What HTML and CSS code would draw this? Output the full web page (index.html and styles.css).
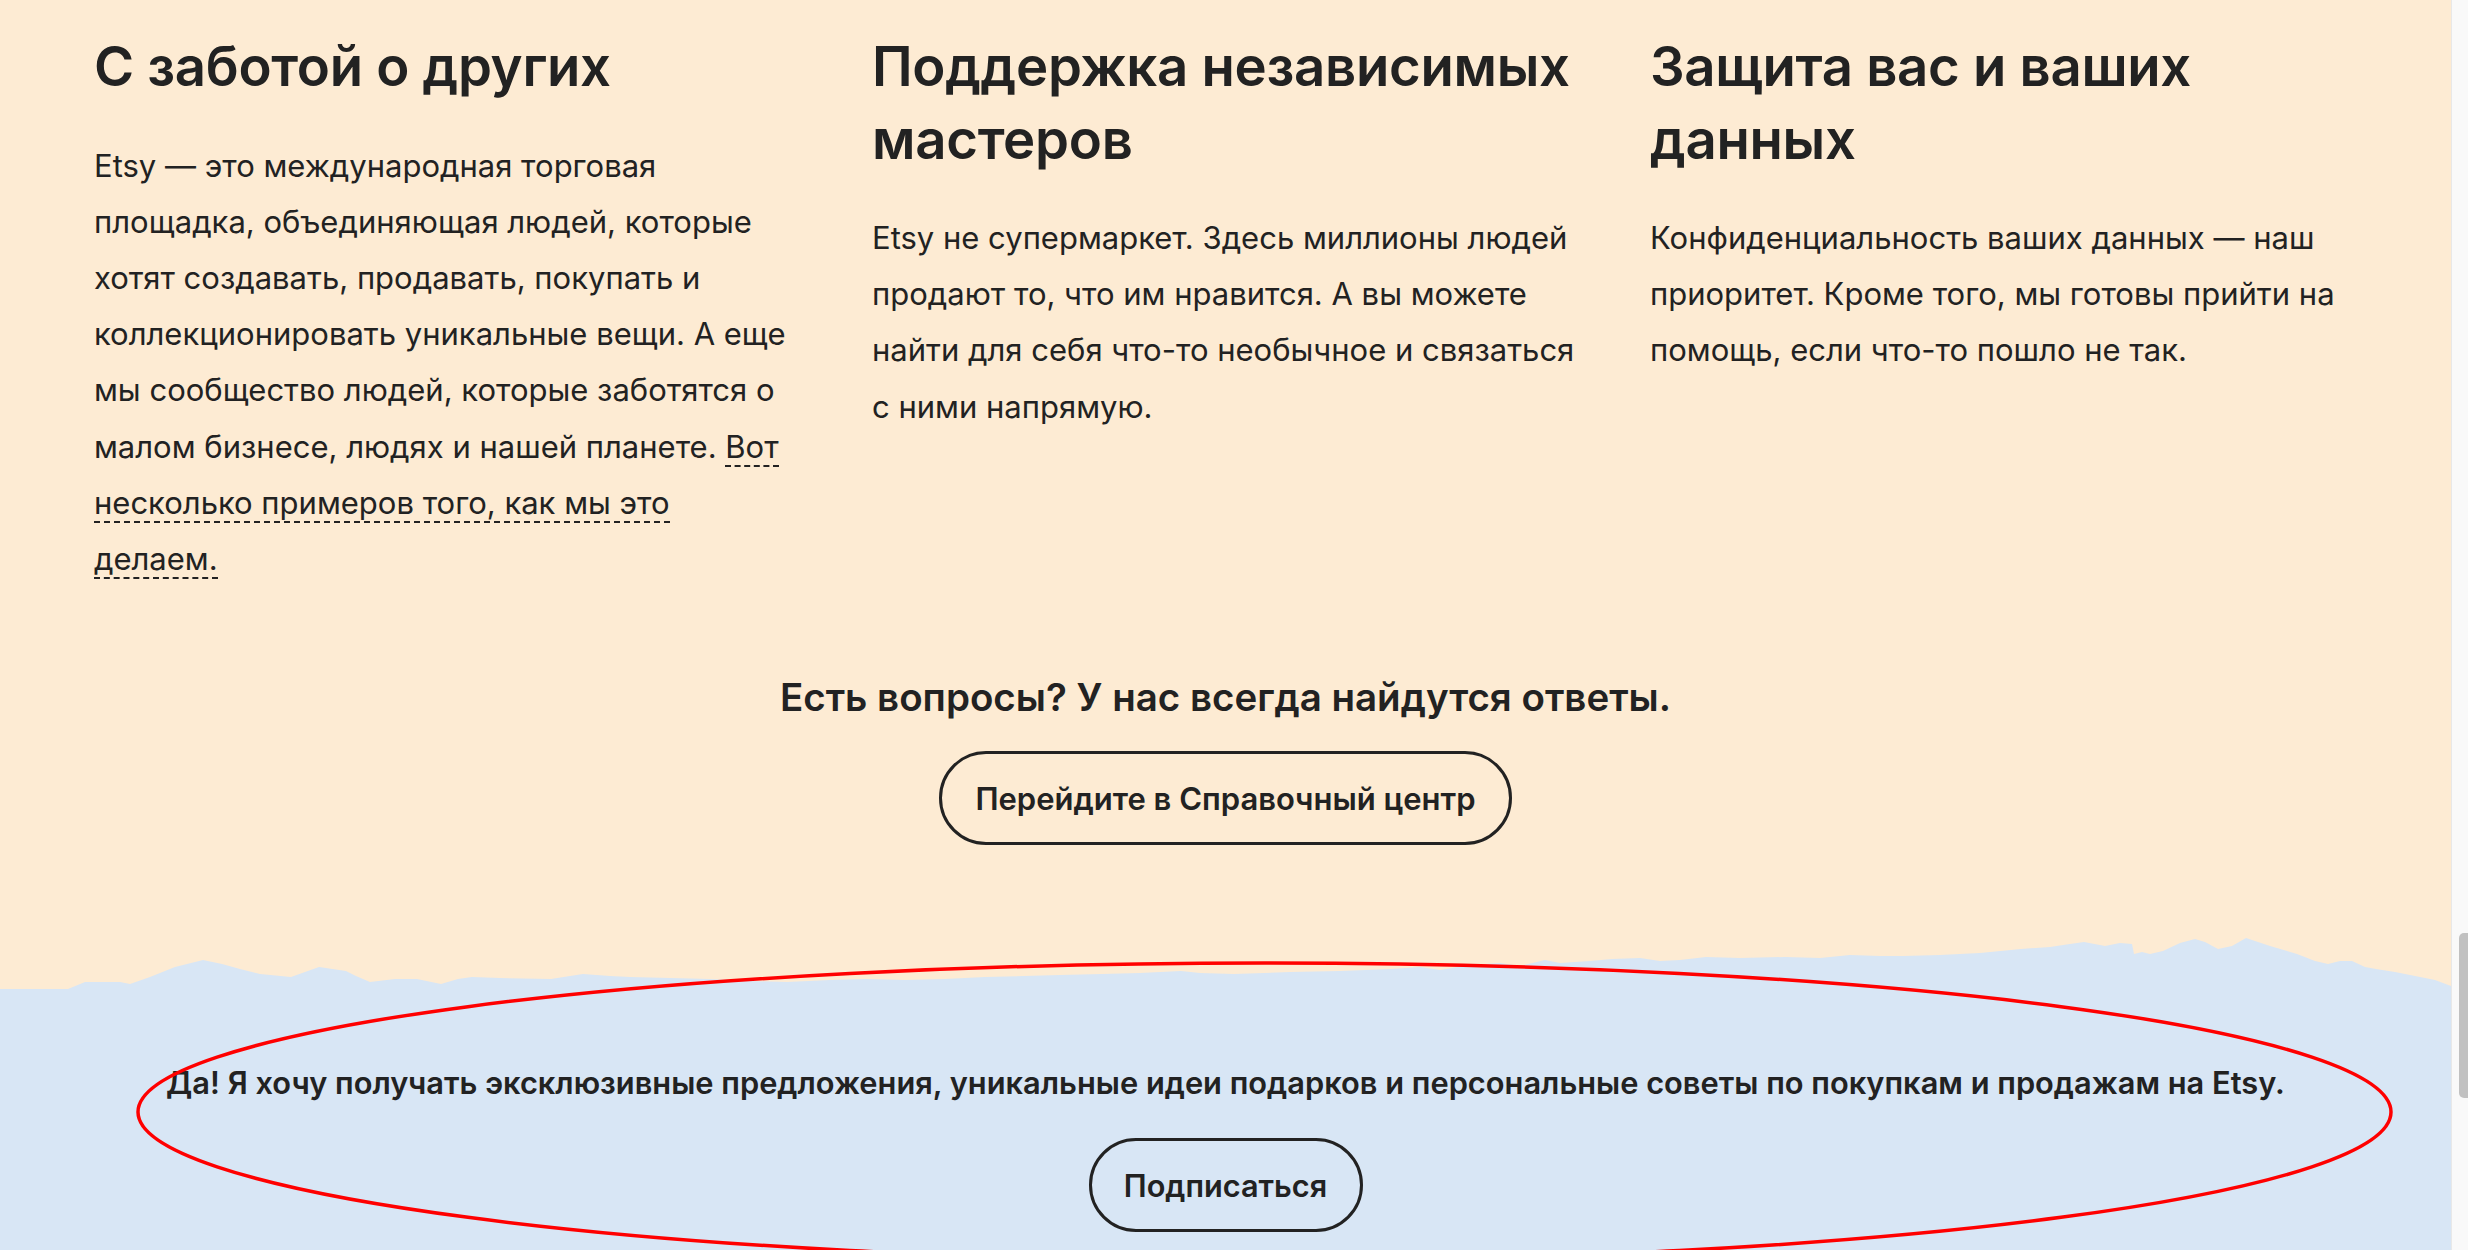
FILE: index.html
```html
<!DOCTYPE html>
<html lang="ru">
<head>
<meta charset="utf-8">
<title>Etsy</title>
<link rel="stylesheet" href="styles.css">
</head>
<body>
<div class="page">
  <section class="features">
    <div class="feature">
      <h2 class="feature-title">С заботой о других</h2>
      <p class="feature-text">Etsy — это международная торговая площадка, объединяющая людей, которые хотят создавать, продавать, покупать и коллекционировать уникальные вещи. А еще мы сообщество людей, которые заботятся о малом бизнесе, людях и нашей планете. <a class="dash-link" href="#">Вот несколько примеров того, как мы это делаем.</a></p>
    </div>
    <div class="feature">
      <h2 class="feature-title">Поддержка независимых мастеров</h2>
      <p class="feature-text">Etsy не супермаркет. Здесь миллионы людей продают то, что им нравится. А вы можете найти для себя что-то необычное и связаться с ними напрямую.</p>
    </div>
    <div class="feature">
      <h2 class="feature-title">Защита вас и ваших данных</h2>
      <p class="feature-text">Конфиденциальность ваших данных — наш приоритет. Кроме того, мы готовы прийти на помощь, если что-то пошло не так.</p>
    </div>
  </section>

  <section class="help">
    <h3 class="help-title">Есть вопросы? У нас всегда найдутся ответы.</h3>
    <a class="pill-btn help-btn" href="#">Перейдите в Справочный центр</a>
  </section>

  <div class="wave">
    <svg class="wave-svg" viewBox="0 0 2451 56" preserveAspectRatio="none" aria-hidden="true">
      <path fill="#d8e6f5" d="M0 55 L68 55 L85 48 L120 48 L130 50 L150 43 L175 33 L203 26 L222 30 L240 35 L260 40 L291 43 L305 38 L319 33 L346 37 L356 42 L370 48 L395 45 L417 45 L441 50 L458 45 L472 43 L500 44 L551 45 L570 42 L583 40 L610 42 L630 43 L670 44 L709 45 L750 47 L787 48 L830 46 L866 45 L905 46 L945 45 L985 43 L1024 42 L1060 41 L1102 40 L1140 39 L1181 37 L1200 39 L1234 40 L1290 38 L1340 37 L1391 35 L1420 33 L1440 36 L1470 31 L1500 29 L1520 32 L1545 26 L1560 29 L1590 27 L1612 25 L1640 24 L1660 27 L1680 26 L1706 23 L1740 24 L1785 23 L1820 24 L1850 21 L1880 22 L1903 22 L1940 21 L1980 19 L2021 15 L2050 13 L2070 10 L2084 8 L2105 12 L2120 9 L2132 10 L2134 20 L2142 18 L2150 20 L2163 17 L2180 9 L2195 5 L2205 8 L2218 15 L2232 12 L2246 4 L2270 12 L2297 20 L2315 27 L2328 30 L2340 27 L2352 27 L2365 33 L2376 35 L2395 38 L2415 42 L2435 46 L2451 52 L2451 56 L0 56 Z"/>
    </svg>
  </div>

  <section class="newsletter">
    <p class="newsletter-text">Да! Я хочу получать эксклюзивные предложения, уникальные идеи подарков и персональные советы по покупкам и продажам на Etsy.</p>
    <a class="pill-btn sub-btn" href="#">Подписаться</a>
  </section>

  <svg class="annotation" viewBox="0 0 2451 1250" aria-hidden="true">
    <ellipse cx="1264.5" cy="1112" rx="1126.5" ry="149" fill="none" stroke="#ff0000" stroke-width="3.5"/>
  </svg>
</div>
<div class="scrollbar"><div class="scroll-thumb"></div></div>
</body>
</html>
```

FILE: styles.css
```css
html, body {
  margin: 0;
  padding: 0;
  height: 100%;
  overflow: hidden;
}

body {
  display: flex;
  background: #fdebd3;
  font-family: "Inter", "Roboto", "Liberation Sans", sans-serif;
  color: #222222;
}

.page {
  position: relative;
  flex: 1;
  min-width: 0;
  background: #fdebd3;
  overflow: hidden;
}

.features {
  display: grid;
  grid-template-columns: repeat(3, 707px);
  column-gap: 71px;
  padding: 30px 0 0 94px;
}

.feature-title {
  margin: 0 0 35px;
  font-size: 54.5px;
  line-height: 72.5px;
  font-weight: 600;
  letter-spacing: -0.3px;
}

.feature-text {
  margin: 0;
  font-size: 31px;
  line-height: 56.2px;
  font-weight: 400;
}

.dash-link {
  color: inherit;
  text-decoration: none;
  border-bottom: 2px dashed #222222;
}

.help {
  display: flex;
  flex-direction: column;
  align-items: center;
  padding-top: 82px;
}

.help-title {
  margin: 0;
  font-size: 38.5px;
  line-height: 56px;
  font-weight: 600;
}

.pill-btn {
  display: flex;
  align-items: center;
  justify-content: center;
  box-sizing: border-box;
  height: 94px;
  border: 3px solid #222222;
  border-radius: 47px;
  color: #222222;
  text-decoration: none;
  font-size: 31px;
  font-weight: 600;
}

.help-btn {
  margin-top: 26px;
  width: 573px;
}

.wave {
  height: 56px;
  margin-top: 89px;
}

.wave-svg {
  display: block;
  width: 100%;
  height: 56px;
}

.newsletter {
  display: flex;
  flex-direction: column;
  align-items: center;
  background: #d8e6f5;
  padding-top: 71px;
  height: 400px;
}

.newsletter-text {
  margin: 0;
  font-size: 30.8px;
  line-height: 44px;
  font-weight: 600;
}

.sub-btn {
  margin-top: 33px;
  width: 274px;
  font-size: 30.7px;
}

.annotation {
  position: absolute;
  left: 0;
  top: 0;
  width: 2451px;
  height: 1250px;
  pointer-events: none;
}

.scrollbar {
  flex: 0 0 17px;
  box-sizing: border-box;
  border-left: 1px solid #e8e8e8;
  background: #f9f9f9;
  padding: 0 0 0 7px;
}

.scroll-thumb {
  margin-top: 933px;
  height: 165px;
  background: #c1c1c1;
  border-radius: 5px 0 0 5px;
}
```
